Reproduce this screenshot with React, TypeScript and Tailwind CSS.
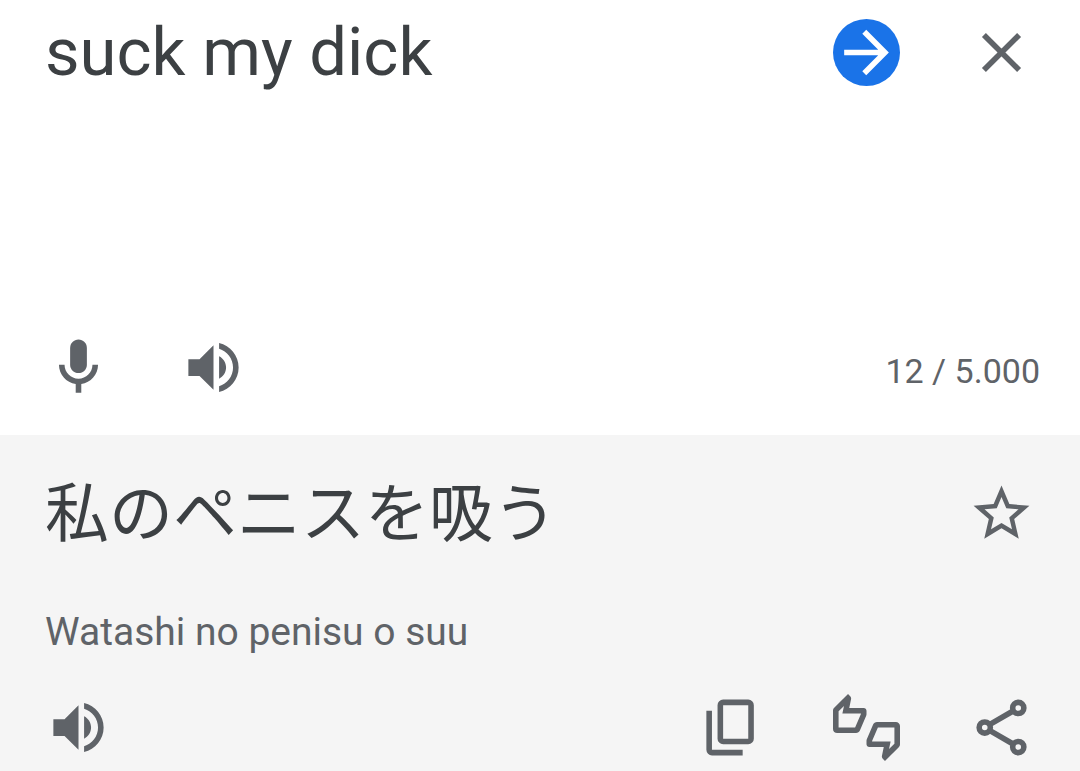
import { useState, type ReactNode } from "react";

const MAX_CHARS = "5.000";

const Icon = ({ children }: { children: ReactNode }) => (
    <svg viewBox="0 0 24 24" fill="currentColor" className="size-full" aria-hidden="true">
        {children}
    </svg>
);

const IconButton = ({ label, onClick, children }: { label: string; onClick?: () => void; children: ReactNode }) => (
    <button
        type="button"
        aria-label={label}
        onClick={onClick}
        className="size-[67px] shrink-0 cursor-pointer rounded-full text-[#5f6368]"
    >
        <Icon>{children}</Icon>
    </button>
);

const VolumeIcon = () => (
    <path d="M3 9v6h4l5 5V4L7 9H3zm13.5 3c0-1.77-1.02-3.29-2.5-4.03v8.05c1.48-.73 2.5-2.25 2.5-4.02zM14 3.23v2.06c2.89.86 5 3.54 5 6.71s-2.11 5.85-5 6.71v2.06c4.01-.91 7-4.49 7-8.77s-2.99-7.86-7-8.77z" />
);

const SourcePanel = () => {
    const [text, setText] = useState("suck my dick");

    return (
        <section className="bg-white pt-3 pb-[34px]">
            <div className="flex items-start pr-[45px] pl-[45px]">
                <textarea
                    aria-label="Source text"
                    rows={4}
                    spellCheck={false}
                    value={text}
                    onChange={(e) => setText(e.target.value)}
                    className="block min-w-0 flex-1 resize-none overflow-hidden text-[67px] leading-[80px] text-[#3c4043] outline-none"
                />
                <div className="flex h-[81px] items-center gap-[68px]">
                    <IconButton label="Translate">
                        <circle cx="12" cy="12" r="12" fill="#1a73e8" />
                        <path d="M4 12h15M11.2 4.6l7.4 7.4-7.4 7.4" fill="none" stroke="#fff" strokeWidth="2" />
                    </IconButton>
                    <IconButton label="Clear source text" onClick={() => setText("")}>
                        <path d="M5.7 5.7l12.6 12.6M18.3 5.7L5.7 18.3" fill="none" stroke="currentColor" strokeWidth="2" />
                    </IconButton>
                </div>
            </div>

            <div className="flex items-center pt-0.5 pr-10 pl-[45px]">
                <div className="flex gap-[68px]">
                    <IconButton label="Translate by voice">
                        <path d="M12 14c1.66 0 3-1.34 3-3V5c0-1.66-1.34-3-3-3S9 3.34 9 5v6c0 1.66 1.34 3 3 3z" />
                        <path d="M17 11c0 2.76-2.24 5-5 5s-5-2.24-5-5H5c0 3.53 2.61 6.43 6 6.92V21h2v-3.08c3.39-.49 6-3.39 6-6.92h-2z" />
                    </IconButton>
                    <IconButton label="Listen to source text">
                        <VolumeIcon />
                    </IconButton>
                </div>
                <span className="ml-auto pt-1.5 text-[34px] leading-10 text-[#5f6368]">
                    {text.length} / {MAX_CHARS}
                </span>
            </div>
        </section>
    );
};

const ResultPanel = () => (
    <section className="flex-1 bg-[#f5f5f5] px-[45px] pt-[45px] pb-[10px]">
        <div className="flex h-[67px] items-center">
            <p
                lang="ja"
                className="flex-1 pt-0.5 font-['Roboto','Noto_Sans_CJK_JP',sans-serif] text-[64px] leading-[67px] text-[#3c4043]"
            >
                私のペニスを吸う
            </p>
            <IconButton label="Save translation">
                <path d="M22 9.24l-7.19-.62L12 2 9.19 8.63 2 9.24l5.46 4.73L5.82 21 12 17.27 18.18 21l-1.63-7.03L22 9.24zM12 15.4l-3.76 2.27 1-4.28-3.32-2.88 4.38-.38L12 6.1l1.71 4.04 4.38.38-3.32 2.88 1 4.28L12 15.4z" />
            </IconButton>
        </div>

        <p className="mt-[61px] text-[39px] leading-[48px] text-[#5f6368]">Watashi no penisu o suu</p>

        <div className="mt-[38px] flex items-center gap-[68px]">
            <IconButton label="Listen to translation">
                <VolumeIcon />
            </IconButton>
            <div className="ml-auto flex gap-[68px]">
                <IconButton label="Copy translation">
                    <path d="M9 2h9a2 2 0 0 1 2 2v12a2 2 0 0 1-2 2H9a2 2 0 0 1-2-2V4a2 2 0 0 1 2-2zm0 2v12h9V4H9zM3 6v14a2 2 0 0 0 2 2h11v-2H5V6H3z" fillRule="evenodd" />
                </IconButton>
                <IconButton label="Rate this translation">
                    <path d="M12 6c0-.55-.45-1-1-1H5.82l.66-3.18.02-.23c0-.31-.13-.59-.33-.8L5.38 0 .44 4.94C.17 5.21 0 5.59 0 6v6.5c0 .83.67 1.5 1.5 1.5h6.75c.62 0 1.15-.38 1.38-.91l2.26-5.29c.07-.17.11-.36.11-.55V6zm-2 1.13L7.92 12H2V6.21l1.93-1.93L3.36 7H10v.13zM22.5 10h-6.75c-.62 0-1.15.38-1.38.91l-2.26 5.29c-.07.17-.11.36-.11.55V18c0 .55.45 1 1 1h5.18l-.66 3.18-.02.24c0 .31.13.59.33.8l.79.78 4.94-4.94c.27-.27.44-.65.44-1.06v-6.5c0-.83-.67-1.5-1.5-1.5zm-.5 7.79l-1.93 1.93.57-2.72H14v-.13L16.08 12H22v5.79z" />
                </IconButton>
                <IconButton label="Share translation">
                    <g fill="none" stroke="currentColor" strokeWidth="2">
                        <circle cx="6" cy="12" r="2" />
                        <circle cx="18" cy="5" r="2" />
                        <circle cx="18" cy="19" r="2" />
                        <path d="M7.7 11l8.6-5M7.7 13l8.6 5" />
                    </g>
                </IconButton>
            </div>
        </div>
    </section>
);

const App = () => (
    <main className="flex min-h-screen flex-col bg-white font-['Roboto',sans-serif]">
        <SourcePanel />
        <ResultPanel />
    </main>
);

export default App;
